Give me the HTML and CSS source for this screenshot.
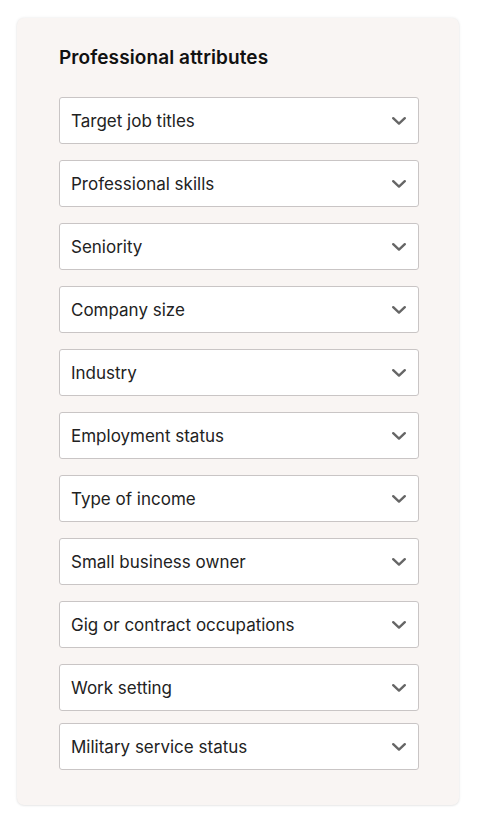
FILE: index.html
```html
<!DOCTYPE html>
<html>
<head>
<meta charset="utf-8">
<link rel="stylesheet" href="styles.css">
</head>
<body>
<div class="card">
  <h2 class="title">Professional attributes</h2>
  <div class="list">
    <div class="select"><span>Target job titles</span><svg class="chev" viewBox="0 0 14 8"><path d="M1.2 1.2 L7 6.6 L12.8 1.2"/></svg></div>
    <div class="select"><span>Professional skills</span><svg class="chev" viewBox="0 0 14 8"><path d="M1.2 1.2 L7 6.6 L12.8 1.2"/></svg></div>
    <div class="select"><span>Seniority</span><svg class="chev" viewBox="0 0 14 8"><path d="M1.2 1.2 L7 6.6 L12.8 1.2"/></svg></div>
    <div class="select"><span>Company size</span><svg class="chev" viewBox="0 0 14 8"><path d="M1.2 1.2 L7 6.6 L12.8 1.2"/></svg></div>
    <div class="select"><span>Industry</span><svg class="chev" viewBox="0 0 14 8"><path d="M1.2 1.2 L7 6.6 L12.8 1.2"/></svg></div>
    <div class="select"><span>Employment status</span><svg class="chev" viewBox="0 0 14 8"><path d="M1.2 1.2 L7 6.6 L12.8 1.2"/></svg></div>
    <div class="select"><span>Type of income</span><svg class="chev" viewBox="0 0 14 8"><path d="M1.2 1.2 L7 6.6 L12.8 1.2"/></svg></div>
    <div class="select"><span>Small business owner</span><svg class="chev" viewBox="0 0 14 8"><path d="M1.2 1.2 L7 6.6 L12.8 1.2"/></svg></div>
    <div class="select"><span>Gig or contract occupations</span><svg class="chev" viewBox="0 0 14 8"><path d="M1.2 1.2 L7 6.6 L12.8 1.2"/></svg></div>
    <div class="select"><span>Work setting</span><svg class="chev" viewBox="0 0 14 8"><path d="M1.2 1.2 L7 6.6 L12.8 1.2"/></svg></div>
    <div class="select last"><span>Military service status</span><svg class="chev" viewBox="0 0 14 8"><path d="M1.2 1.2 L7 6.6 L12.8 1.2"/></svg></div>
  </div>
</div>
</body>
</html>
```
FILE: styles.css
```css
html, body {
  margin: 0;
  padding: 0;
  background: #ffffff;
}
body {
  padding: 18px 21px 20px 17px;
  font-family: "Inter", "Liberation Sans", sans-serif;
}
.card {
  background: #f9f5f3;
  border-radius: 7px;
  box-shadow: 0 0 3px rgba(0,0,0,0.10), 0 1px 2px rgba(0,0,0,0.05);
  padding: 29px 40px 35px 42px;
}
.title {
  margin: 0 0 28px 0;
  font-size: 19px;
  font-weight: 600;
  color: #111;
  line-height: 22px;
  letter-spacing: 0.1px;
}
.list {
  display: flex;
  flex-direction: column;
  gap: 16px;
}
.select {
  height: 47px;
  box-sizing: border-box;
  background: #fff;
  border: 1.5px solid #c9c5c5;
  border-radius: 3px;
  display: flex;
  align-items: center;
  justify-content: space-between;
  padding: 0 12px 0 11px;
  font-size: 17px;
  color: #222;
}
.select.last {
  margin-top: -4px;
}
.chev {
  width: 14px;
  height: 8px;
  fill: none;
  stroke: #666;
  stroke-width: 2.4;
  stroke-linecap: round;
  stroke-linejoin: round;
}
```
